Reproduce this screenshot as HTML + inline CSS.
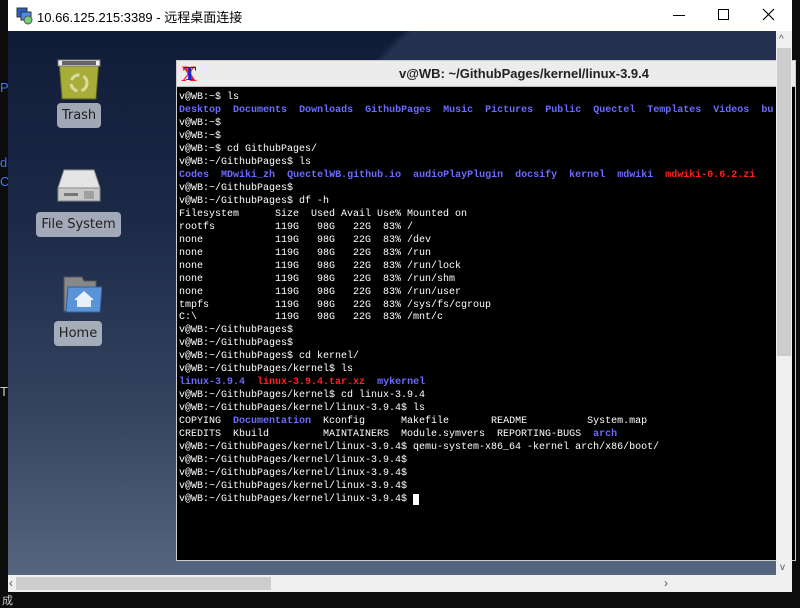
<!DOCTYPE html>
<html><head><meta charset="utf-8"><style>
*{margin:0;padding:0;box-sizing:border-box}
body{width:800px;height:600px;background:#0c0c0c;position:relative;overflow:hidden;font-family:"Liberation Sans","Noto Sans CJK SC",sans-serif}
.abs{position:absolute}
#title{left:8px;top:0;width:784px;height:31px;background:#fff}
#desk{left:8px;top:31px;width:768px;height:544px;overflow:hidden;
background:radial-gradient(ellipse 900px 520px at 700px 120px,#243150 0%,#243150 40%,transparent 41%),linear-gradient(180deg,#101b36 0%,#1c2a48 35%,#34445f 70%,#56667f 100%)}
.lbl{position:absolute;background:rgba(200,205,215,.78);border-radius:4px;color:#222;font-family:"DejaVu Sans",sans-serif;font-size:13px;text-align:center;line-height:25px}
#term{left:176px;top:60px;width:620px;height:501px;background:#000;border:1px solid #ccc}
#tbar{left:0;top:0;width:100%;height:26px;background:#ececec;border-bottom:1px solid #bbb}
pre{position:absolute;left:2px;top:31px;font-family:"Liberation Mono",monospace;font-size:10px;line-height:12.97px;color:#fff;white-space:pre;letter-spacing:0}
.b{color:#6b6bff;font-weight:bold}.r{color:#ff2020;font-weight:bold}
</style></head><body>
<div class="abs" style="left:0;top:80px;color:#3a78ff;font-size:13px">P</div>
<div class="abs" style="left:0;top:155px;color:#3a78ff;font-size:13px">d</div>
<div class="abs" style="left:0;top:174px;color:#3a78ff;font-size:13px">C</div>
<div class="abs" style="left:0;top:384px;color:#ccc;font-size:13px">T</div>
<div class="abs" style="left:2px;top:592px;color:#ccc;font-size:11px">成</div>
<div id="title" class="abs">
 <svg class="abs" style="left:8px;top:7px" width="18" height="18"><rect x="1" y="1" width="10" height="9" fill="#2a5fc8" stroke="#333"/><rect x="5" y="5" width="10" height="8" fill="#4b8be8" stroke="#333"/><circle cx="12" cy="13" r="4" fill="#7c7" stroke="#555"/></svg>
 <div class="abs" style="left:29px;top:7px;font-size:13px;color:#000">10.66.125.215:3389 - 远程桌面连接</div>
 <div class="abs" style="left:665px;top:15px;width:12px;height:1px;background:#000"></div>
 <div class="abs" style="left:710px;top:9px;width:11px;height:11px;border:1px solid #000"></div>
 <svg class="abs" style="left:754px;top:8px" width="13" height="13"><path d="M1 1L12 12M12 1L1 12" stroke="#000" stroke-width="1.2"/></svg>
</div>
<div id="desk" class="abs">
 <svg class="abs" style="left:48px;top:26px" width="46" height="44"><path d="M3 4h40l-3 38H6z" fill="#a8ad3a" stroke="#5a5a20"/><path d="M2 3h42v6H2z" fill="#eee" stroke="#777"/><rect x="6" y="4" width="34" height="4" fill="#666"/><circle cx="23" cy="26" r="8" fill="none" stroke="#d8dca0" stroke-width="3" stroke-dasharray="10 4"/></svg>
 <div class="lbl" style="left:49px;top:72px;width:44px">Trash</div>
 <svg class="abs" style="left:48px;top:137px" width="46" height="36"><path d="M8 2h30l6 18H2z" fill="#e4e4e4" stroke="#999"/><rect x="2" y="20" width="42" height="13" fill="#c8c8c8" stroke="#888"/><rect x="8" y="25" width="14" height="3" fill="#777"/><path d="M29 23v8M31 23v8M33 23v8M35 23v8M37 23v8" stroke="#777"/></svg>
 <div class="lbl" style="left:28px;top:181px;width:85px">File System</div>
 <svg class="abs" style="left:48px;top:245px" width="46" height="38"><path d="M8 1h18l2 4h12v30H8z" fill="#888" stroke="#555"/><path d="M12 11h34l-2 25H10z" fill="#5b93d8" stroke="#2d5ea8"/><path d="M28 15l-10 9h3v7h14v-7h3z" fill="#e8f0fa"/></svg>
 <div class="lbl" style="left:46px;top:290px;width:48px">Home</div>
</div>
<div id="term" class="abs">
 <div id="tbar" class="abs">
  <div class="abs" style="left:4px;top:2px;font-family:'Liberation Serif',serif;font-weight:bold;font-size:22px;color:#f22;line-height:22px">X<span style="position:absolute;left:2px;top:0;color:#22c;font-size:20px">T</span></div>
  <div class="abs" style="left:222px;top:5px;font-family:'Liberation Sans',sans-serif;font-weight:bold;font-size:13px;color:#222;white-space:nowrap">v@WB: ~/GithubPages/kernel/linux-3.9.4</div>
 </div>
<pre>v@WB:~$ ls
<span class="b">Desktop</span>  <span class="b">Documents</span>  <span class="b">Downloads</span>  <span class="b">GithubPages</span>  <span class="b">Music</span>  <span class="b">Pictures</span>  <span class="b">Public</span>  <span class="b">Quectel</span>  <span class="b">Templates</span>  <span class="b">Videos</span>  <span class="b">bu</span>
v@WB:~$
v@WB:~$
v@WB:~$ cd GithubPages/
v@WB:~/GithubPages$ ls
<span class="b">Codes</span>  <span class="b">MDwiki_zh</span>  <span class="b">QuectelWB.github.io</span>  <span class="b">audioPlayPlugin</span>  <span class="b">docsify</span>  <span class="b">kernel</span>  <span class="b">mdwiki</span>  <span class="r">mdwiki-0.6.2.zi</span>
v@WB:~/GithubPages$
v@WB:~/GithubPages$ df -h
Filesystem      Size  Used Avail Use% Mounted on
rootfs          119G   98G   22G  83% /
none            119G   98G   22G  83% /dev
none            119G   98G   22G  83% /run
none            119G   98G   22G  83% /run/lock
none            119G   98G   22G  83% /run/shm
none            119G   98G   22G  83% /run/user
tmpfs           119G   98G   22G  83% /sys/fs/cgroup
C:\             119G   98G   22G  83% /mnt/c
v@WB:~/GithubPages$
v@WB:~/GithubPages$
v@WB:~/GithubPages$ cd kernel/
v@WB:~/GithubPages/kernel$ ls
<span class="b">linux-3.9.4</span>  <span class="r">linux-3.9.4.tar.xz</span>  <span class="b">mykernel</span>
v@WB:~/GithubPages/kernel$ cd linux-3.9.4
v@WB:~/GithubPages/kernel/linux-3.9.4$ ls
COPYING  <span class="b">Documentation</span>  Kconfig      Makefile       README          System.map
CREDITS  Kbuild         MAINTAINERS  Module.symvers  REPORTING-BUGS  <span class="b">arch</span>
v@WB:~/GithubPages/kernel/linux-3.9.4$ qemu-system-x86_64 -kernel arch/x86/boot/
v@WB:~/GithubPages/kernel/linux-3.9.4$
v@WB:~/GithubPages/kernel/linux-3.9.4$
v@WB:~/GithubPages/kernel/linux-3.9.4$
v@WB:~/GithubPages/kernel/linux-3.9.4$ <span style="background:#fff">&nbsp;</span></pre>
</div>
<div class="abs" style="left:776px;top:31px;width:16px;height:544px;background:#f0f0f0"></div>
<div class="abs" style="left:777px;top:48px;width:14px;height:308px;background:#cdcdcd"></div>
<div class="abs" style="left:779px;top:34px;font-size:10px;color:#555">^</div>
<div class="abs" style="left:780px;top:562px;font-size:10px;color:#555">v</div>
<div class="abs" style="left:8px;top:575px;width:784px;height:17px;background:#f0f0f0"></div>
<div class="abs" style="left:16px;top:577px;width:255px;height:13px;background:#cdcdcd"></div>
<div class="abs" style="left:9px;top:576px;font-size:12px;color:#555">‹</div>
<div class="abs" style="left:664px;top:576px;font-size:12px;color:#555">›</div>
</body></html>
